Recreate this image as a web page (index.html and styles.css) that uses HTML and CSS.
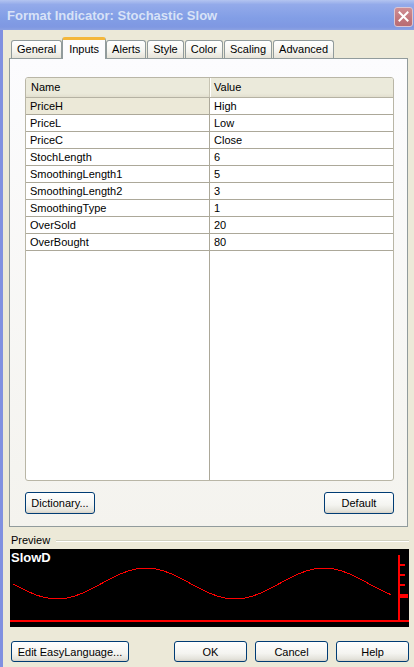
FILE: index.html
```html
<!DOCTYPE html>
<html lang="en">

<head>
    <meta charset="UTF-8">
    <meta name="viewport" content="width=device-width, initial-scale=1.0">
    <title>Format Indicator: Stochastic Slow</title>
    <link rel="stylesheet" href="styles.css">
</head>

<body>
    <div class="window">
        <div class="titlebar">
            <span class="title">Format Indicator: Stochastic Slow</span>
            <button class="close-button" title="Close">
                <svg width="11" height="11" viewBox="0 0 11 11">
                    <path d="M1.5 1.5 L9.5 9.5 M9.5 1.5 L1.5 9.5" stroke="#fff" stroke-width="2" stroke-linecap="square" />
                </svg>
            </button>
        </div>

        <div class="client">
            <div class="tabs">
                <div class="tab">General</div>
                <div class="tab active">Inputs</div>
                <div class="tab">Alerts</div>
                <div class="tab">Style</div>
                <div class="tab">Color</div>
                <div class="tab">Scaling</div>
                <div class="tab">Advanced</div>
            </div>

            <div class="tab-panel">
                <div class="listview">
                    <div class="lv-header">
                        <div class="lv-col-name">Name</div>
                        <div class="lv-col-value">Value</div>
                    </div>
                    <div class="lv-body">
                        <!-- input names -->
                        <div class="lv-column names">
                            <div class="lv-cell selected">PriceH</div>
                            <div class="lv-cell">PriceL</div>
                            <div class="lv-cell">PriceC</div>
                            <div class="lv-cell">StochLength</div>
                            <div class="lv-cell">SmoothingLength1</div>
                            <div class="lv-cell">SmoothingLength2</div>
                            <div class="lv-cell">SmoothingType</div>
                            <div class="lv-cell">OverSold</div>
                            <div class="lv-cell">OverBought</div>
                        </div>
                        <!-- input values -->
                        <div class="lv-column values">
                            <div class="lv-cell">High</div>
                            <div class="lv-cell">Low</div>
                            <div class="lv-cell">Close</div>
                            <div class="lv-cell">6</div>
                            <div class="lv-cell">5</div>
                            <div class="lv-cell">3</div>
                            <div class="lv-cell">1</div>
                            <div class="lv-cell">20</div>
                            <div class="lv-cell">80</div>
                        </div>
                    </div>
                </div>

                <div class="panel-buttons">
                    <button class="btn btn-small">Dictionary...</button>
                    <button class="btn btn-small">Default</button>
                </div>
            </div>

            <div class="preview-header">
                <span>Preview</span>
                <span class="rule"></span>
            </div>

            <div class="preview">
                <svg width="399" height="78" viewBox="0 0 399 78">
                    <text x="1" y="13" class="plot-name">SlowD</text>
                    <polyline class="plot-line" points="3,34.8 11,39.1 19,43 27,46.3 35,48.6 43,49.8 47,50 55,49.4 63,47.6 71,44.8 79,41.1 87,37 95,32.6 103,28.4 111,24.7 119,21.7 127,19.8 136,19 145,19.8 153,21.7 161,24.7 169,28.4 177,32.6 185,37 193,41.1 201,44.8 209,47.6 217,49.4 225,50 233,49.4 241,47.6 249,44.8 257,41.1 265,37 273,32.6 281,28.4 289,24.7 297,21.7 305,19.8 314,19 323,19.8 331,21.7 339,24.7 347,28.4 355,32.6 363,37 371,41.1 379,44.8 381,45.6" />
                    <!-- price axis -->
                    <rect x="0" y="71" width="399" height="2" fill="#ff0000" />
                    <rect x="388" y="6" width="2" height="66" fill="#ff0000" />
                    <rect x="388" y="15" width="7" height="2" fill="#ff0000" />
                    <rect x="388" y="25" width="7" height="2" fill="#ff0000" />
                    <rect x="388" y="35" width="7" height="2" fill="#ff0000" />
                    <rect x="388" y="45" width="10" height="4" fill="#ff0000" />
                </svg>
            </div>

            <div class="dialog-buttons">
                <button class="btn btn-edit">Edit EasyLanguage...</button>
                <button class="btn btn-ok">OK</button>
                <button class="btn">Cancel</button>
                <button class="btn">Help</button>
            </div>
        </div>
    </div>
</body>

</html>
```

FILE: styles.css
```css
* {
    box-sizing: border-box;
}

body {
    margin: 0;
    font-family: "Liberation Sans", Arial, sans-serif;
    font-size: 11px;
    background-color: #ece9d8;
    color: #000;
}

.window {
    height: 667px;
    display: flex;
    flex-direction: column;
    overflow: hidden;
}

/* inactive XP caption */
.titlebar {
    height: 30px;
    flex-shrink: 0;
    display: flex;
    align-items: center;
    justify-content: space-between;
    padding: 0 1px 0 7px;
    background: linear-gradient(#b3c4f0, #93aaea 15%, #829ee6 60%, #7f98e2 90%, #8ca2e2);
}

.title {
    font-weight: bold;
    font-size: 13px;
    color: #d8e2f7;
}

.close-button {
    width: 19px;
    height: 20px;
    padding: 0;
    margin-top: 3px;
    display: flex;
    align-items: center;
    justify-content: center;
    border: 1px solid #dcc6d2;
    border-radius: 3px;
    background: linear-gradient(#cf8e94, #c2767c 60%, #b86c72);
}

.client {
    flex: 1;
    display: flex;
    flex-direction: column;
    padding: 0 5px 0 6px;
    border-left: 3px solid #8090e0;
}

/* tab strip */
.tabs {
    display: flex;
    align-items: flex-end;
    height: 21px;
    margin-top: 7px;
    padding-left: 2px;
    position: relative;
    z-index: 1;
}

.tab {
    height: 18px;
    line-height: 17px;
    padding: 0 5px;
    margin-right: 1px;
    border: 1px solid #919b9c;
    border-bottom: none;
    border-radius: 3px 3px 0 0;
    background: linear-gradient(#ffffff, #f5f4ef 60%, #e6e3d8);
}

.tab.active {
    height: 22px;
    line-height: 18px;
    margin: 0 0 -1px -1px;
    padding: 0 6px;
    background: #fcfcfe;
    border-top: 3px solid #f4b73b;
}

.tab-panel {
    height: 469px;
    margin-right: 1px;
    display: flex;
    flex-direction: column;
    padding: 18px 13px 0 15px;
    border: 1px solid #919b9c;
    background: linear-gradient(#fcfcfe, #f4f3ee);
}

/* input list */
.listview {
    height: 404px;
    display: flex;
    flex-direction: column;
    border: 1px solid #b9b6a6;
    border-radius: 3px;
    background-color: #fff;
    overflow: hidden;
}

.lv-header {
    display: flex;
    height: 20px;
    border-bottom: 1px solid #b5b2a3;
    background: linear-gradient(#ebeadb, #ebeadb 80%, #e2dfcf);
}

.lv-col-name,
.lv-col-value {
    line-height: 19px;
    padding-left: 5px;
}

.lv-col-name {
    width: 183px;
}

.lv-col-value {
    flex: 1;
    padding-left: 4px;
    border-left: 1px solid #c7c4b3;
    box-shadow: inset 1px 0 #fff;
}

.lv-body {
    flex: 1;
    display: flex;
}

.lv-column.names {
    width: 184px;
    border-right: 1px solid #aca899;
}

.lv-column.values {
    flex: 1;
}

.lv-cell {
    height: 17px;
    line-height: 16px;
    padding-left: 4px;
    border-bottom: 1px solid #aca899;
}

.lv-cell.selected {
    background-color: #ece9d8;
}

.panel-buttons {
    display: flex;
    justify-content: space-between;
    margin-top: 11px;
}

/* XP push buttons */
.btn {
    height: 21px;
    width: 73px;
    padding: 0;
    font-family: "Liberation Sans", Arial, sans-serif;
    font-size: 11px;
    color: #000;
    border: 1px solid #003c74;
    border-radius: 3px;
    background: linear-gradient(#ffffff, #f4f4f0 60%, #e3e2da 90%, #d6d0c5);
}

.btn-small {
    width: 70px;
    height: 22px;
}

.btn-edit {
    width: 118px;
}

.btn-ok {
    margin-left: auto;
}

.preview-header {
    display: flex;
    align-items: center;
    height: 22px;
    padding: 4px 0 0 2px;
    gap: 6px;
}

.rule {
    flex: 1;
    height: 2px;
    margin-top: 2px;
    background-color: #d0d0bf;
    border-bottom: 1px solid #fff;
}

.preview {
    height: 78px;
    flex-shrink: 0;
    margin-left: 1px;
    background-color: #000;
}

.preview svg {
    display: block;
}

.plot-name {
    font-family: "Liberation Sans", Arial, sans-serif;
    font-weight: bold;
    font-size: 13px;
    fill: #fff;
}

.plot-line {
    fill: none;
    stroke: #ff0000;
    stroke-width: 1;
    shape-rendering: crispEdges;
}

.dialog-buttons {
    display: flex;
    gap: 8px;
    margin-top: 14px;
    padding-left: 2px;
}
```
